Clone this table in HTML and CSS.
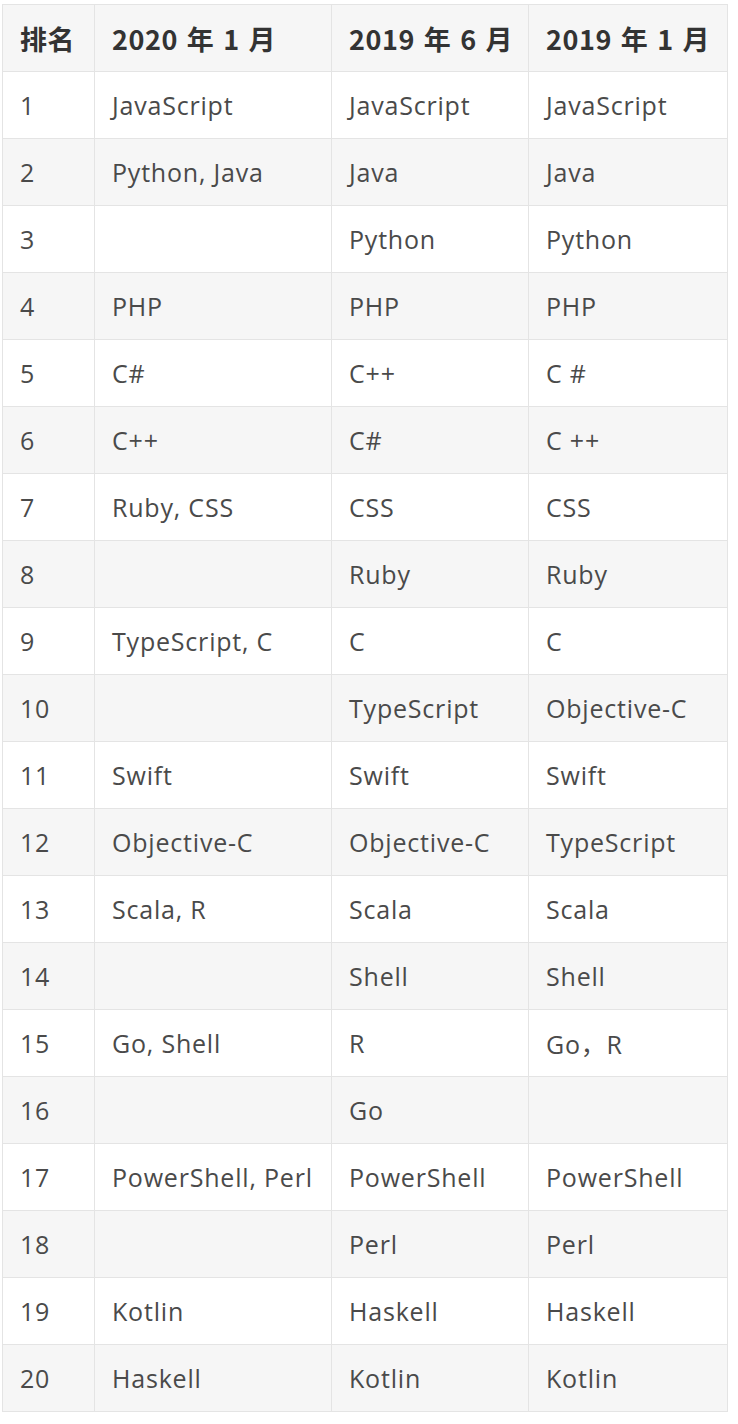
FILE: index.html
```html
<!DOCTYPE html>
<html lang="zh">
<head>
<meta charset="utf-8">
<link rel="stylesheet" href="styles.css">
</head>
<body>
<table class="rank">
<colgroup><col class="c1"><col class="c2"><col class="c3"><col class="c4"></colgroup>
<thead>
<tr><th>排名</th><th>2020 年 1 月</th><th>2019 年 6 月</th><th>2019 年 1 月</th></tr>
</thead>
<tbody>
<tr><td>1</td><td>JavaScript</td><td>JavaScript</td><td>JavaScript</td></tr>
<tr><td>2</td><td>Python, Java</td><td>Java</td><td>Java</td></tr>
<tr><td>3</td><td></td><td>Python</td><td>Python</td></tr>
<tr><td>4</td><td>PHP</td><td>PHP</td><td>PHP</td></tr>
<tr><td>5</td><td>C#</td><td>C++</td><td>C #</td></tr>
<tr><td>6</td><td>C++</td><td>C#</td><td>C ++</td></tr>
<tr><td>7</td><td>Ruby, CSS</td><td>CSS</td><td>CSS</td></tr>
<tr><td>8</td><td></td><td>Ruby</td><td>Ruby</td></tr>
<tr><td>9</td><td>TypeScript, C</td><td>C</td><td>C</td></tr>
<tr><td>10</td><td></td><td>TypeScript</td><td>Objective-C</td></tr>
<tr><td>11</td><td>Swift</td><td>Swift</td><td>Swift</td></tr>
<tr><td>12</td><td>Objective-C</td><td>Objective-C</td><td>TypeScript</td></tr>
<tr><td>13</td><td>Scala, R</td><td>Scala</td><td>Scala</td></tr>
<tr><td>14</td><td></td><td>Shell</td><td>Shell</td></tr>
<tr><td>15</td><td>Go, Shell</td><td>R</td><td>Go，R</td></tr>
<tr><td>16</td><td></td><td>Go</td><td></td></tr>
<tr><td>17</td><td>PowerShell, Perl</td><td>PowerShell</td><td>PowerShell</td></tr>
<tr><td>18</td><td></td><td>Perl</td><td>Perl</td></tr>
<tr><td>19</td><td>Kotlin</td><td>Haskell</td><td>Haskell</td></tr>
<tr><td>20</td><td>Haskell</td><td>Kotlin</td><td>Kotlin</td></tr>
</tbody>
</table>
</body>
</html>
```
FILE: styles.css
```css
html, body {
  margin: 0;
  padding: 0;
  background: #ffffff;
}
body {
  padding: 4px 0 0 2px;
  font-family: "Open Sans", "Noto Sans CJK SC", sans-serif;
  color: #4a4a4a;
}
.rank {
  border-collapse: collapse;
  table-layout: fixed;
  width: 725px;
}
.c1 { width: 92px; }
.c2 { width: 237px; }
.c3 { width: 197px; }
.c4 { width: 199px; }
.rank th,
.rank td {
  height: 67px;
  box-sizing: border-box;
  padding: 0 0 0 17px;
  border: 1px solid #e4e4e4;
  text-align: left;
  vertical-align: middle;
  font-size: 25px;
  letter-spacing: 0.8px;
  white-space: nowrap;
  overflow: hidden;
}
.rank th {
  font-family: "Noto Sans CJK SC", sans-serif;
  font-weight: 700;
  color: #333333;
  background: #f6f6f6;
  font-size: 27px;
  letter-spacing: 0.6px;
  word-spacing: 2px;
}
.rank tbody tr:nth-child(even) td {
  background: #f6f6f6;
}
.rank tbody tr:nth-child(odd) td {
  background: #ffffff;
}
```
